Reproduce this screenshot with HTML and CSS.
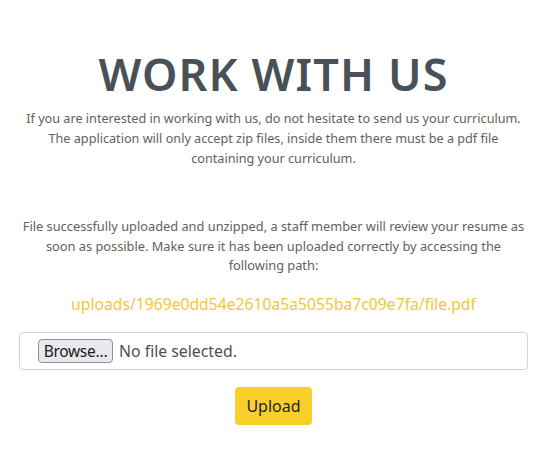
FILE: index.html
```html
<!DOCTYPE html>
<html lang="en">
<head>
<meta charset="utf-8">
<title>Work with us</title>
<link rel="stylesheet" href="styles.css">
</head>
<body>
<main class="page">
  <h1 class="title">WORK WITH US</h1>
  <p class="intro">If you are interested in working with us, do not hesitate to send us your curriculum.<br>The application will only accept zip files, inside them there must be a pdf file<br>containing your curriculum.</p>
  <p class="notice">File successfully uploaded and unzipped, a staff member will review your resume as<br>soon as possible. Make sure it has been uploaded correctly by accessing the<br>following path:</p>
  <p class="path">uploads/1969e0dd54e2610a5a5055ba7c09e7fa/file.pdf</p>
  <form class="upload-form">
    <div class="file-field">
      <span class="browse">Browse…</span>
      <span class="file-name">No file selected.</span>
    </div>
    <button type="button" class="upload-btn">Upload</button>
  </form>
</main>
</body>
</html>
```
FILE: styles.css
```css
* { box-sizing: border-box; }
body {
  margin: 0;
  padding-right: 6px;
  background: #fff;
  font-family: "Noto Sans", "Open Sans", sans-serif;
  color: #212529;
}
.page {
  width: 509px;
  margin: 0 auto;
  padding-top: 44px;
  display: flex;
  flex-direction: column;
  align-items: center;
  text-align: center;
}
.title {
  margin: 0;
  font-size: 45px;
  font-weight: 600;
  letter-spacing: 1.1px;
  line-height: 60px;
  color: #495057;
}
.intro, .notice {
  margin: 0;
  font-size: 12.8px;
  line-height: 20px;
  color: #616161;
  white-space: nowrap;
}
.intro { margin-top: 4px; font-size: 12.65px; }
.notice { margin-top: 49px; line-height: 19.5px; }
.path {
  margin: 16px 0 0;
  font-size: 15.7px;
  line-height: 24px;
  color: #f6c63a;
}
.upload-form {
  margin-top: 16px;
  width: 100%;
  display: flex;
  flex-direction: column;
  align-items: center;
  gap: 17px;
}
.file-field {
  width: 100%;
  height: 38px;
  border: 1px solid #ced4da;
  border-radius: 4px;
  display: flex;
  align-items: center;
  padding: 0 18px;
  gap: 6px;
  font-size: 15.8px;
  color: #495057;
}
.browse {
  display: inline-flex;
  align-items: center;
  justify-content: center;
  width: 75px;
  height: 24px;
  border: 1px solid #8f8f9d;
  border-radius: 4px;
  background: #e9e9ed;
  color: #1b1b1b;
  font-size: 15.5px;
  letter-spacing: -0.3px;
}
.upload-btn {
  width: 77px;
  height: 38px;
  padding: 0;
  border: none;
  border-radius: 4px;
  background: #f9d02b;
  color: #212529;
  font-family: inherit;
  font-size: 16px;
}
```
